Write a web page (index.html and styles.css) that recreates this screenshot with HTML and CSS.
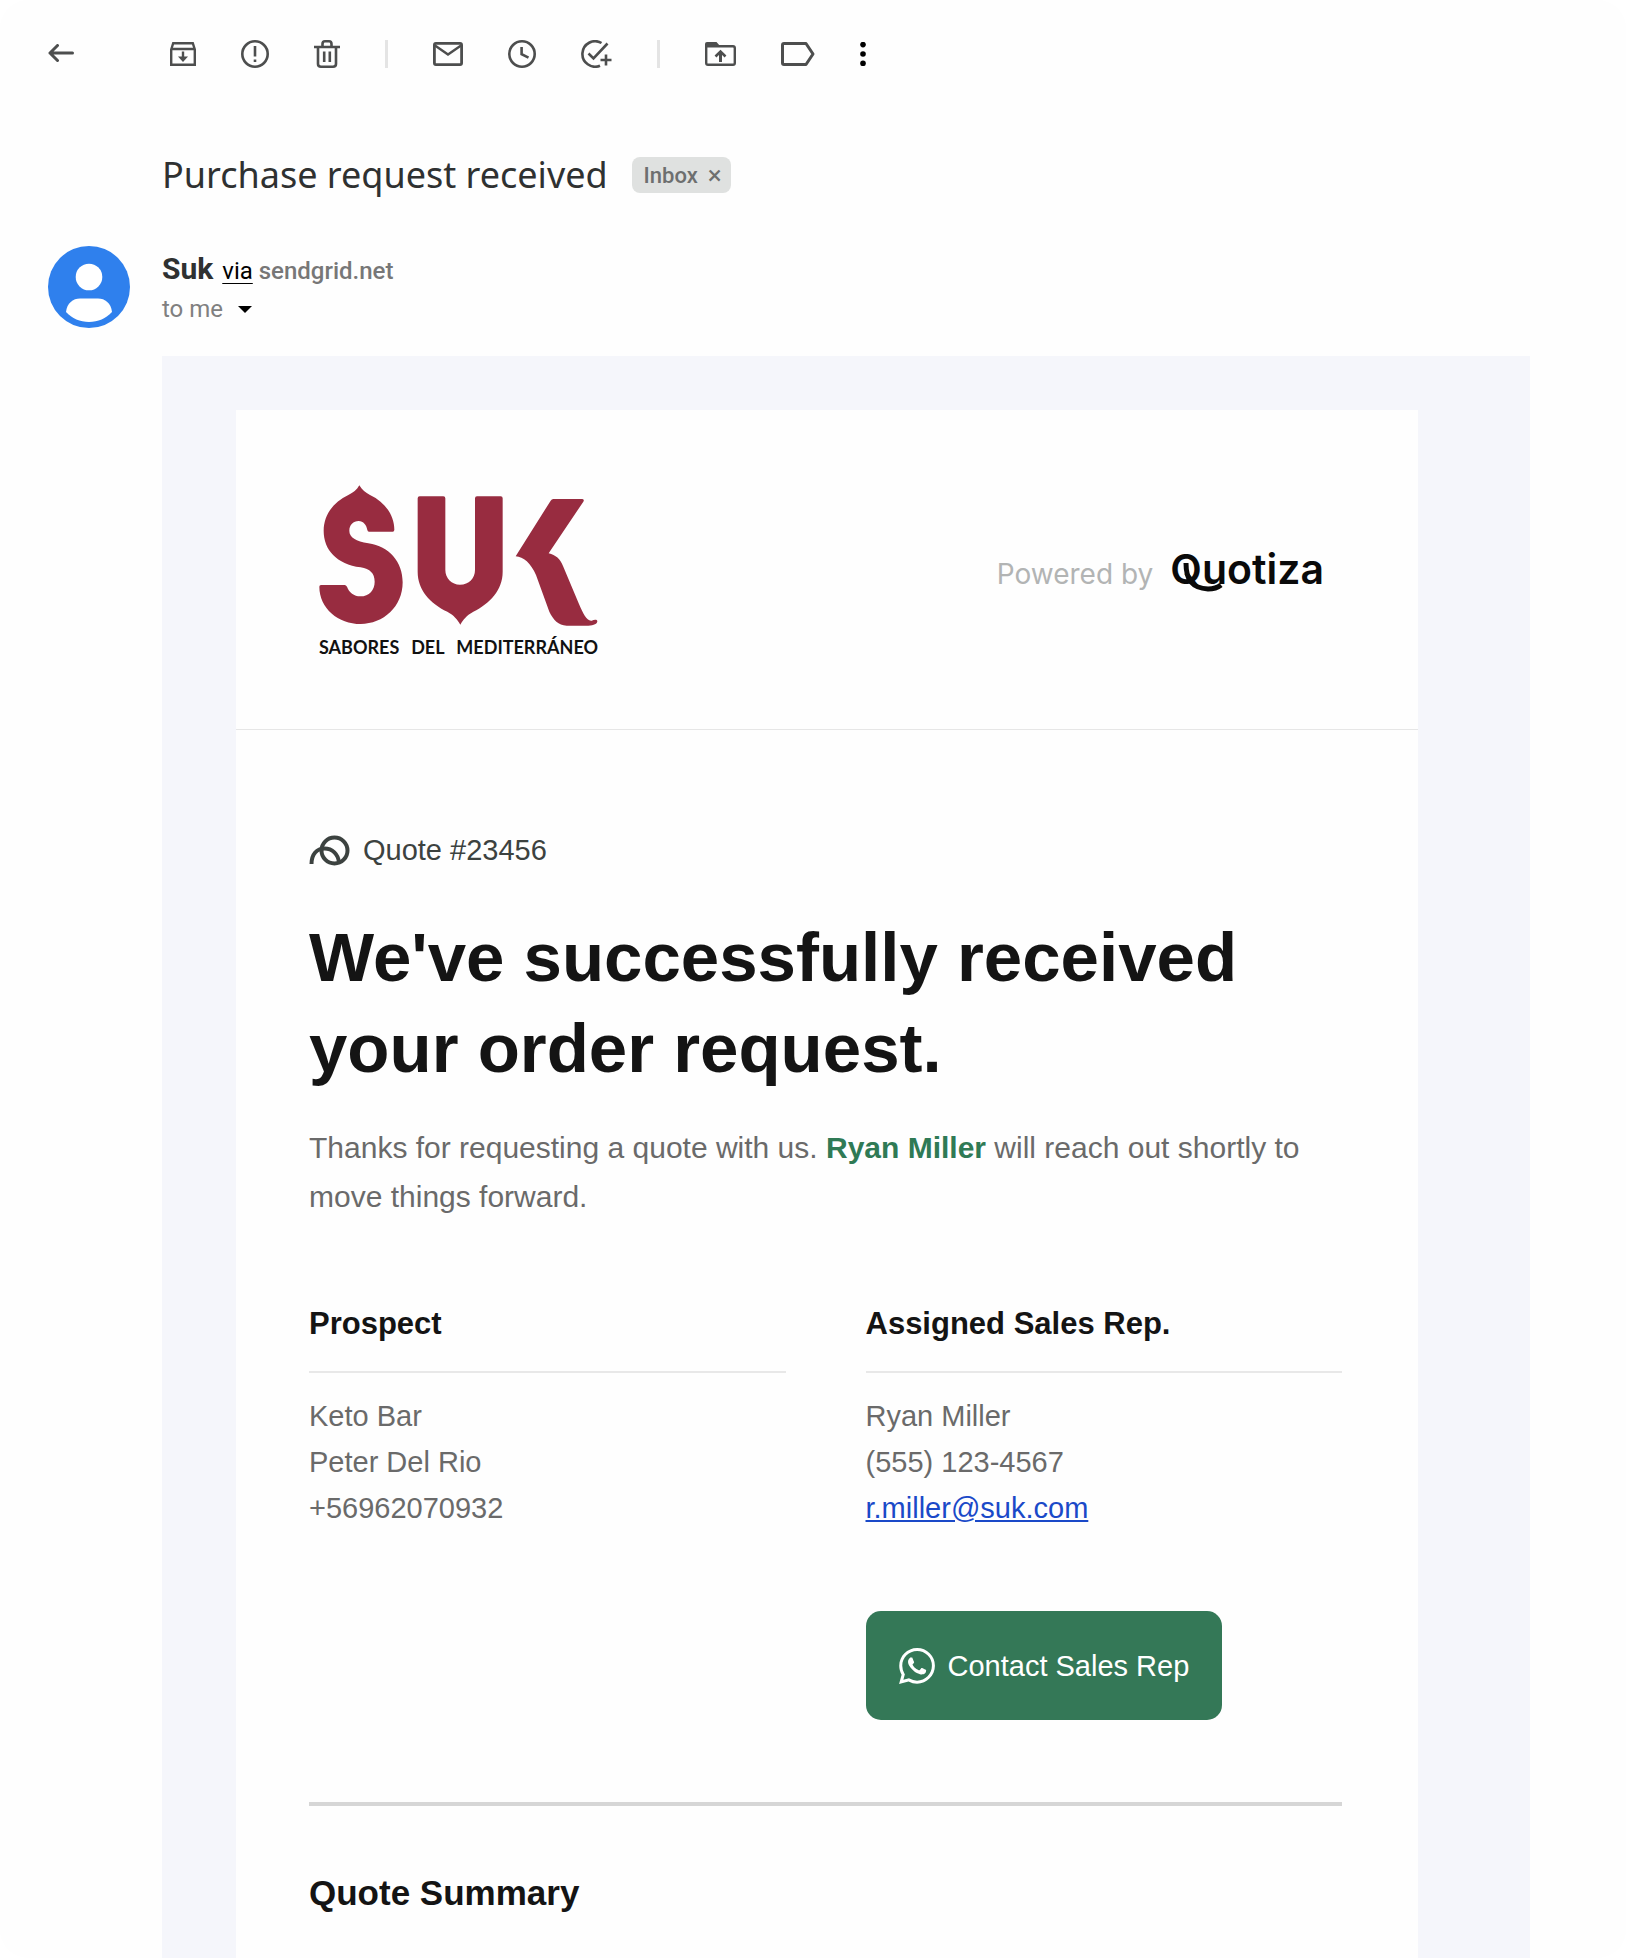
FILE: index.html
```html
<!DOCTYPE html>
<html lang="en">
<head>
<meta charset="utf-8">
<meta name="viewport" content="width=device-width, initial-scale=1">
<title>Purchase request received</title>
<link rel="stylesheet" href="styles.css">
</head>
<body>
<div class="window">
  <nav class="toolbar" aria-label="Message actions">
    <button class="tool tool-back" type="button" aria-label="Back">
      <svg width="28" height="20" viewBox="0 0 28 20" fill="none" stroke="currentColor" stroke-width="3" stroke-linecap="round" stroke-linejoin="round"><path d="M24.500 9H2M9.500 1.500L2 9l7.500 7.500"/></svg>
    </button>
    <button class="tool" type="button" aria-label="Archive">
      <svg width="26" height="24" viewBox="0 0 26 24" fill="none" stroke="currentColor" stroke-width="2.400"><path d="M1.200 7.500L3.200 1.200H22.800L24.800 7.500V22.800H1.200zM1.200 7H24.800"/><path d="M13 9.500V16"/><path d="M8 14.500H18L13 20z" fill="currentColor" stroke="none"/></svg>
    </button>
    <button class="tool" type="button" aria-label="Report spam">
      <svg width="28" height="28" viewBox="0 0 28 28" fill="none" stroke="currentColor" stroke-width="2.600"><circle cx="14" cy="14" r="12.700"/><path d="M14 6V16.500M14 19.500V22"/></svg>
    </button>
    <button class="tool" type="button" aria-label="Delete">
      <svg width="26" height="28" viewBox="0 0 26 28" fill="none" stroke="currentColor" stroke-width="2.600"><path d="M0 7H26M4 7V24Q4 26.700 7 26.700H19Q22 26.700 22 24V7M8.500 7V4Q8.500 1.300 11 1.300H15Q17.500 1.300 17.500 4V7M10.200 11.500V22M15.800 11.500V22"/></svg>
    </button>
    <span class="tool-divider"></span>
    <button class="tool" type="button" aria-label="Mark as unread">
      <svg width="30" height="24" viewBox="0 0 30 24" fill="none" stroke="currentColor" stroke-width="2.800"><rect x="1.400" y="1.400" width="27.200" height="21.200" rx="1.500"/><path d="M2 3.500L15 12.500L28 3.500" stroke-width="2.400"/></svg>
    </button>
    <button class="tool" type="button" aria-label="Snooze">
      <svg width="28" height="28" viewBox="0 0 28 28" fill="none" stroke="currentColor" stroke-width="2.600"><circle cx="14" cy="14" r="12.700"/><path d="M13.600 7V14.200L20.500 17.600"/></svg>
    </button>
    <button class="tool" type="button" aria-label="Add to tasks">
      <svg width="31" height="28" viewBox="0 0 31 28" fill="none" stroke="currentColor" stroke-width="2.600"><path d="M20.500 3A12.700 12.700 0 1 0 19 25.700"/><path d="M7.500 13.500L12.500 18.500L26.500 3.500M25 14.500V25.500M19.500 20H30.500"/></svg>
    </button>
    <span class="tool-divider"></span>
    <button class="tool" type="button" aria-label="Move to">
      <svg width="31" height="24" viewBox="0 0 31 24" fill="none" stroke="currentColor" stroke-width="2.400"><path d="M1.200 4V21Q1.200 22.800 3 22.800H28Q29.800 22.800 29.800 21V6Q29.800 4.200 28 4.200H1.200"/><path d="M0 5V2Q0 0 2 0H11.500L15 4V5z" fill="currentColor" stroke="none"/><path d="M15.500 20V10" stroke-width="3"/><path d="M10.500 14.500L15.500 9.500L20.500 14.500" stroke-width="2.600"/></svg>
    </button>
    <button class="tool" type="button" aria-label="Labels">
      <svg width="34" height="24" viewBox="0 0 34 24" fill="none" stroke="currentColor" stroke-width="3" stroke-linejoin="round"><path d="M3 1.500H25L32 12L25 22.500H3Q1.500 22.500 1.500 21V3Q1.500 1.500 3 1.500z"/></svg>
    </button>
    <button class="tool tool-more" type="button" aria-label="More">
      <svg width="6" height="24" viewBox="0 0 6 24" fill="currentColor"><circle cx="3" cy="2.600" r="2.800"/><circle cx="3" cy="12" r="2.800"/><circle cx="3" cy="21.400" r="2.800"/></svg>
    </button>
  </nav>

  <header class="subject">
    <h1 class="subject-title">Purchase request received</h1>
    <span class="label">Inbox <button class="label-remove" type="button" aria-label="Remove label">×</button></span>
  </header>

  <section class="sender">
    <svg class="avatar" width="82" height="82" viewBox="0 0 82 82" role="img" aria-label="Suk"><circle cx="41" cy="41" r="41" fill="#2f80ed"/><circle cx="41" cy="31" r="13.300" fill="#fff"/><path d="M18 66C19 57 25 52.500 32 52.500H50C57 52.500 63 57 64 66C58 72.500 50 76 41 76S24 72.500 18 66z" fill="#fff"/></svg>
    <div class="sender-text">
      <p class="sender-line"><strong class="sender-name">Suk</strong> <a class="sender-via" href="#">via</a> <span class="sender-domain">sendgrid.net</span></p>
      <button class="recipient" type="button">to me
        <svg width="14" height="7" viewBox="0 0 14 7"><path d="M0 0H14L7 7z" fill="#000"/></svg>
      </button>
    </div>
  </section>

  <main class="message">
    <article class="card">
      <div class="brand">
        <div class="suk">
          <svg class="suk-mark" width="279" height="141" viewBox="87 75 837 423" fill="#982c40" role="img" aria-label="Suk">
            <path d="M208 76C217 90 226 98 240 105C288 128 313 168 313 209Q313 215 308 215H237Q233 215 232 210C230 195 220 183 206 183C190 183 178 195 178 212C178 232 198 244 235 250C298 260 338 305 338 367C338 440 280 492 212 492C145 492 88 445 88 380Q88 375 93 375H164Q168 375 171 380C177 397 192 409 211 409C238 409 254 390 254 365C254 340 240 327 212 322C140 312 101 270 101 212C101 165 130 126 175 105C190 98 200 90 208 76z"/>
            <path d="M389 109H460Q466 109 466 115V330C466 355 485 374 510 374C537 374 555 355 555 330V115Q555 109 561 109H632Q638 109 638 115V335C638 390 600 430 550 455C530 466 520 478 511 494C502 478 492 466 472 455C420 430 383 390 383 335V115Q383 109 389 109z"/>
            <path d="M790 117H877Q884 118 880 125L776 280C797 285 811 297 819 318L866 430C880 462 890 484 905 482C912 479 921 477 922 484C922 491 912 497 895 497H830C805 495 790 480 778 455L738 345C723 310 700 290 677 289L782 122Q785 117 790 117z"/>
          </svg>
          <p class="suk-tagline"><span>SABORES</span> <span>DEL</span> <span>MEDITERRÁNEO</span></p>
        </div>
        <p class="powered">
          <span>Powered by</span>
          <span class="quotiza">Quotiza<svg class="quotiza-tail" width="54" height="44" viewBox="0 0 54 44" fill="none" stroke="currentColor" stroke-width="5"><path d="M16 13C16 30 22 38 38 39Q46 39 51 35"/></svg></span>
        </p>
      </div>

      <div class="content">
        <p class="quote-id">
          <svg width="42" height="31" viewBox="0 0 42 31" fill="none" stroke="currentColor" stroke-width="4"><circle cx="25.500" cy="15.500" r="13"/><path d="M2.500 29C2.500 19 8 13.500 15.500 13.500C23 13.500 29.500 19 30 28"/></svg>
          Quote #23456
        </p>
        <h2 class="headline">We've successfully received your order request.</h2>
        <p class="intro">Thanks for requesting a quote with us. <strong>Ryan Miller</strong> will reach out shortly to move things forward.</p>

        <div class="contacts">
          <section class="contact">
            <h3 class="contact-title">Prospect</h3>
            <p>Keto Bar</p>
            <p>Peter Del Rio</p>
            <p>+56962070932</p>
          </section>
          <section class="contact">
            <h3 class="contact-title">Assigned Sales Rep.</h3>
            <p>Ryan Miller</p>
            <p>(555) 123-4567</p>
            <p><a class="email" href="mailto:r.miller@suk.com">r.miller@suk.com</a></p>
            <button class="contact-button" type="button">
              <svg width="36" height="36" viewBox="0 0 24 24" fill="currentColor"><path d="M17.472 14.382c-.297-.149-1.758-.867-2.030-.967-.273-.099-.471-.148-.670.150-.197.297-.767.966-.940 1.164-.173.199-.347.223-.644.075-.297-.150-1.255-.463-2.390-1.475-.883-.788-1.480-1.761-1.653-2.059-.173-.297-.018-.458.130-.606.134-.133.298-.347.446-.520.149-.174.198-.298.298-.497.099-.198.050-.371-.025-.520-.075-.149-.669-1.612-.916-2.207-.242-.579-.487-.500-.669-.510-.173-.008-.371-.010-.570-.010-.198 0-.520.074-.792.372-.272.297-1.040 1.016-1.040 2.479 0 1.462 1.065 2.875 1.213 3.074.149.198 2.096 3.200 5.077 4.487.709.306 1.262.489 1.694.625.712.227 1.360.195 1.871.118.571-.085 1.758-.719 2.006-1.413.248-.694.248-1.289.173-1.413-.074-.124-.272-.198-.570-.347m-5.421 7.403h-.004a9.870 9.870 0 0 1-5.031-1.378l-.361-.214-3.741.982.998-3.648-.235-.374a9.860 9.860 0 0 1-1.510-5.260c.001-5.450 4.436-9.884 9.888-9.884 2.640 0 5.122 1.030 6.988 2.898a9.825 9.825 0 0 1 2.893 6.994c-.003 5.450-4.437 9.884-9.885 9.884m8.413-18.297A11.815 11.815 0 0 0 12.050 0C5.495 0 .160 5.335.157 11.892c0 2.096.547 4.142 1.588 5.945L.057 24l6.305-1.654a11.882 11.882 0 0 0 5.683 1.448h.005c6.554 0 11.890-5.335 11.893-11.893a11.821 11.821 0 0 0-3.480-8.413z"/></svg>
              Contact Sales Rep
            </button>
          </section>
        </div>

        <h3 class="summary-title">Quote Summary</h3>
      </div>
    </article>
  </main>
</div>
</body>
</html>
```
FILE: styles.css
```css
* {
  box-sizing: border-box;
}

body,
h1,
h2,
h3,
p {
  margin: 0;
}

body {
  background: #fff;
  font-family: Roboto, "Liberation Sans", sans-serif;
  color: #2f3131;
}

svg {
  display: block;
  flex: none;
}

button {
  padding: 0;
  border: 0;
  background: none;
  color: inherit;
  font: inherit;
  cursor: pointer;
}

.window {
  display: flex;
  flex-direction: column;
  min-height: 100vh;
  border-radius: 28px;
  background: #fefefe;
}

/* Toolbar */
.toolbar {
  display: flex;
  align-items: center;
  gap: 45px;
  height: 28px;
  margin: 40px 48px 0;
  color: #4d4e4e;
}

.tool-back {
  margin-right: 49px;
}

.tool-more {
  color: #000;
}

.tool-divider {
  width: 3px;
  height: 28px;
  background: #e4e4e4;
}

/* Subject */
.subject {
  display: flex;
  align-items: center;
  gap: 24px;
  margin: 83px 96px 0 162px;
}

.subject-title {
  font: 400 36px/48px "Noto Sans", sans-serif;
}

.label {
  display: flex;
  align-items: center;
  gap: 10px;
  height: 36px;
  padding: 0 9px 0 12px;
  border-radius: 8px;
  background: #dfe1e0;
  color: #6d6f6f;
  font-size: 22px;
  font-weight: 500;
}

.label-remove {
  font-size: 26px;
  font-weight: 400;
}

/* Sender */
.sender {
  display: flex;
  gap: 32px;
  margin: 47px 96px 0 48px;
}

.sender-text {
  padding-top: 5px;
}

.sender-line {
  font-size: 24px;
  line-height: 36px;
}

.sender-name {
  margin-right: 3px;
  font-size: 30px;
}

.sender-via {
  color: #000;
  text-decoration-thickness: 1px;
  text-underline-offset: 4px;
}

.sender-domain {
  color: #777;
  font-weight: 500;
}

.recipient {
  display: flex;
  align-items: center;
  gap: 15px;
  margin-top: 6px;
  color: #808080;
  font-size: 24px;
  line-height: 28px;
}

/* Message body */
.message {
  display: flex;
  flex: 1;
  margin: 28px 96px 0 162px;
  padding: 54px 112px 0 74px;
  background: #f5f6fb;
  font-family: "Liberation Sans", Arial, sans-serif;
}

.card {
  flex: 1;
  background: #fefefe;
}

.brand {
  display: flex;
  align-items: center;
  justify-content: space-between;
  padding: 75px 94px 71px 83px;
  border-bottom: 1px solid #e6e6e6;
}

.suk-tagline {
  display: flex;
  justify-content: space-between;
  margin-top: 10px;
  color: #111;
  font: 700 18px/22px Lato, sans-serif;
}

.powered {
  display: flex;
  align-items: baseline;
  gap: 17px;
  color: #b2b4b4;
  font: 400 28px/48px Inter, sans-serif;
}

.quotiza {
  position: relative;
  color: #0a0a0a;
  font-size: 41px;
  font-weight: 600;
}

.quotiza-tail {
  position: absolute;
  left: 0;
  top: 5px;
}

.content {
  padding: 102px 76px 45px 73px;
}

.quote-id {
  display: flex;
  align-items: center;
  gap: 12px;
  color: #3c4240;
  font-size: 29px;
  line-height: 36px;
}

.headline {
  margin-top: 44px;
  color: #141414;
  font-size: 69px;
  line-height: 91px;
}

.intro {
  margin-top: 29px;
  color: #6a6a6a;
  font-size: 30px;
  line-height: 49px;
}

.intro strong {
  color: #2f7a55;
}

/* Contacts */
.contacts {
  display: grid;
  grid-template-columns: 1fr 1fr;
  gap: 80px;
  margin-top: 85px;
  padding-bottom: 82px;
  border-bottom: 4px solid #d6d6d6;
}

.contact {
  color: #6a6a6a;
  font-size: 29px;
  line-height: 46px;
}

.contact-title {
  margin-bottom: 20px;
  padding-bottom: 29px;
  border-bottom: 2px solid #e8e8e8;
  color: #141414;
  font-size: 31px;
  line-height: 36px;
}

.email {
  color: #1a49c8;
}

.contact-button {
  display: flex;
  align-items: center;
  gap: 13px;
  margin-top: 80px;
  padding: 32px 33px 31px;
  border-radius: 15px;
  background: #347857;
  color: #fff;
  line-height: 46px;
}

.summary-title {
  margin-top: 67px;
  color: #141414;
  font-size: 35px;
  line-height: 40px;
}
```
